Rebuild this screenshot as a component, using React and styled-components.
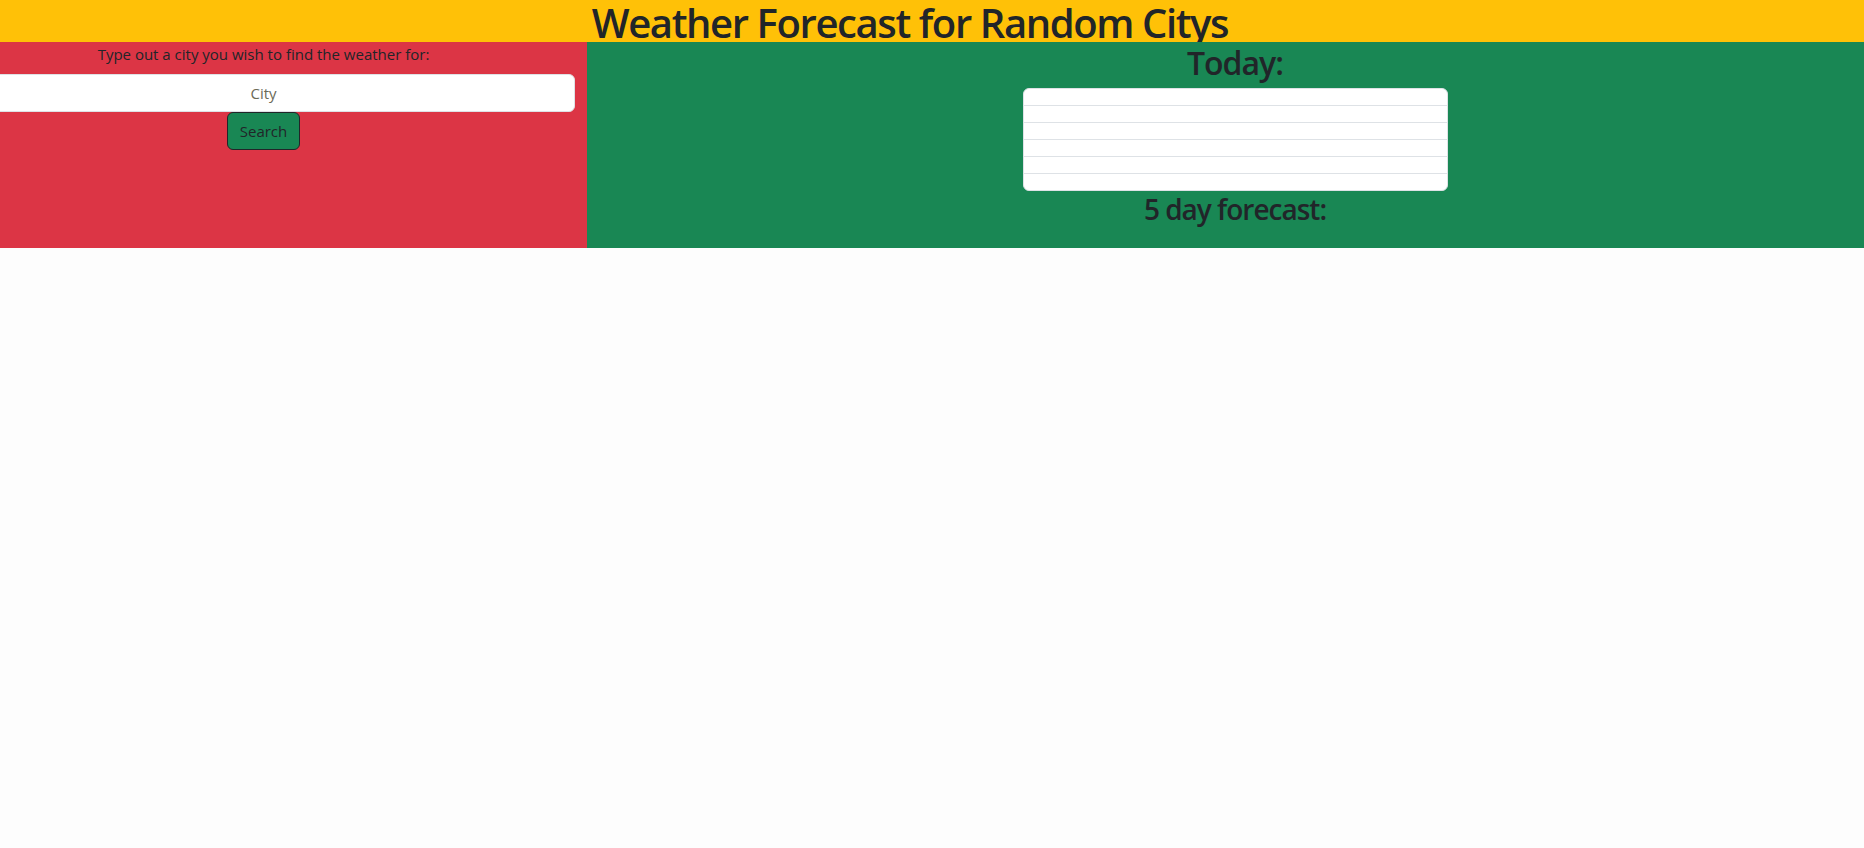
import React from "react";
import styled, { createGlobalStyle } from "styled-components";

const GlobalStyle = createGlobalStyle`
  body {
    margin: 0;
    background: #fdfdfd;
    font-family: "Open Sans", "Noto Sans", sans-serif;
    color: #212529;
  }
`;

const Header = styled.header`
  box-sizing: border-box;
  height: 42px;
  padding: 4px 44px 0 0;
  background-color: #ffc107;
  text-align: center;
`;

const Title = styled.h1`
  margin: 0;
  font-size: 40px;
  font-weight: 600;
  line-height: 38px;
  letter-spacing: -1.4px;
`;

const Panels = styled.main`
  display: flex;
  height: 206px;
`;

const SearchPanel = styled.section`
  width: 587px;
  padding-right: 60px;
  box-sizing: border-box;
  background-color: #dc3545;
  display: flex;
  flex-direction: column;
  align-items: center;
`;

const Prompt = styled.p`
  margin: 0 0 8px;
  font-size: 15px;
  line-height: 24px;
`;

const CityInput = styled.input`
  flex-shrink: 0;
  width: 622px;
  height: 38px;
  box-sizing: border-box;
  border: 1px solid #dee2e6;
  border-radius: 6px;
  background: #fff;
  font-family: inherit;
  font-size: 15px;
  text-align: center;
  color: #212529;

  &::placeholder {
    color: #6b6a58;
  }
`;

const SearchButton = styled.button`
  height: 38px;
  padding: 0 12px;
  background-color: #198754;
  border: 1px solid #212529;
  border-radius: 6px;
  font-family: inherit;
  font-size: 15px;
  color: #212529;
`;

const ForecastPanel = styled.section`
  flex: 1;
  padding-left: 19px;
  background-color: #198754;
  display: flex;
  flex-direction: column;
  align-items: center;
`;

const Heading = styled.h2`
  margin: ${(p) => p.$top}px 0 ${(p) => p.$bottom}px;
  font-size: ${(p) => p.$size}px;
  font-weight: 600;
  line-height: 1.2;
  letter-spacing: -1px;
`;

const TodayList = styled.ul`
  width: 423px;
  margin: 0;
  padding: 0;
  list-style: none;
  background: #fff;
  border: 1px solid #dee2e6;
  border-radius: 6px;
  overflow: hidden;
`;

const TodayItem = styled.li`
  height: 16px;

  & + & {
    border-top: 1px solid #dee2e6;
  }
`;

export default function App() {
  const rows = ["temp", "wind", "humidity", "uv", "desc", "icon"];

  return (
    <>
      <GlobalStyle />
      <Header>
        <Title>Weather Forecast for Random Citys</Title>
      </Header>
      <Panels>
        <SearchPanel>
          <Prompt>Type out a city you wish to find the weather for:</Prompt>
          <CityInput type="text" placeholder="City" />
          <SearchButton type="button">Search</SearchButton>
        </SearchPanel>
        <ForecastPanel>
          <Heading $size={32} $top={2} $bottom={6}>
            Today:
          </Heading>
          <TodayList>
            {rows.map((r) => (
              <TodayItem key={r} />
            ))}
          </TodayList>
          <Heading $size={28} $top={2} $bottom={0}>
            5 day forecast:
          </Heading>
        </ForecastPanel>
      </Panels>
    </>
  );
}
